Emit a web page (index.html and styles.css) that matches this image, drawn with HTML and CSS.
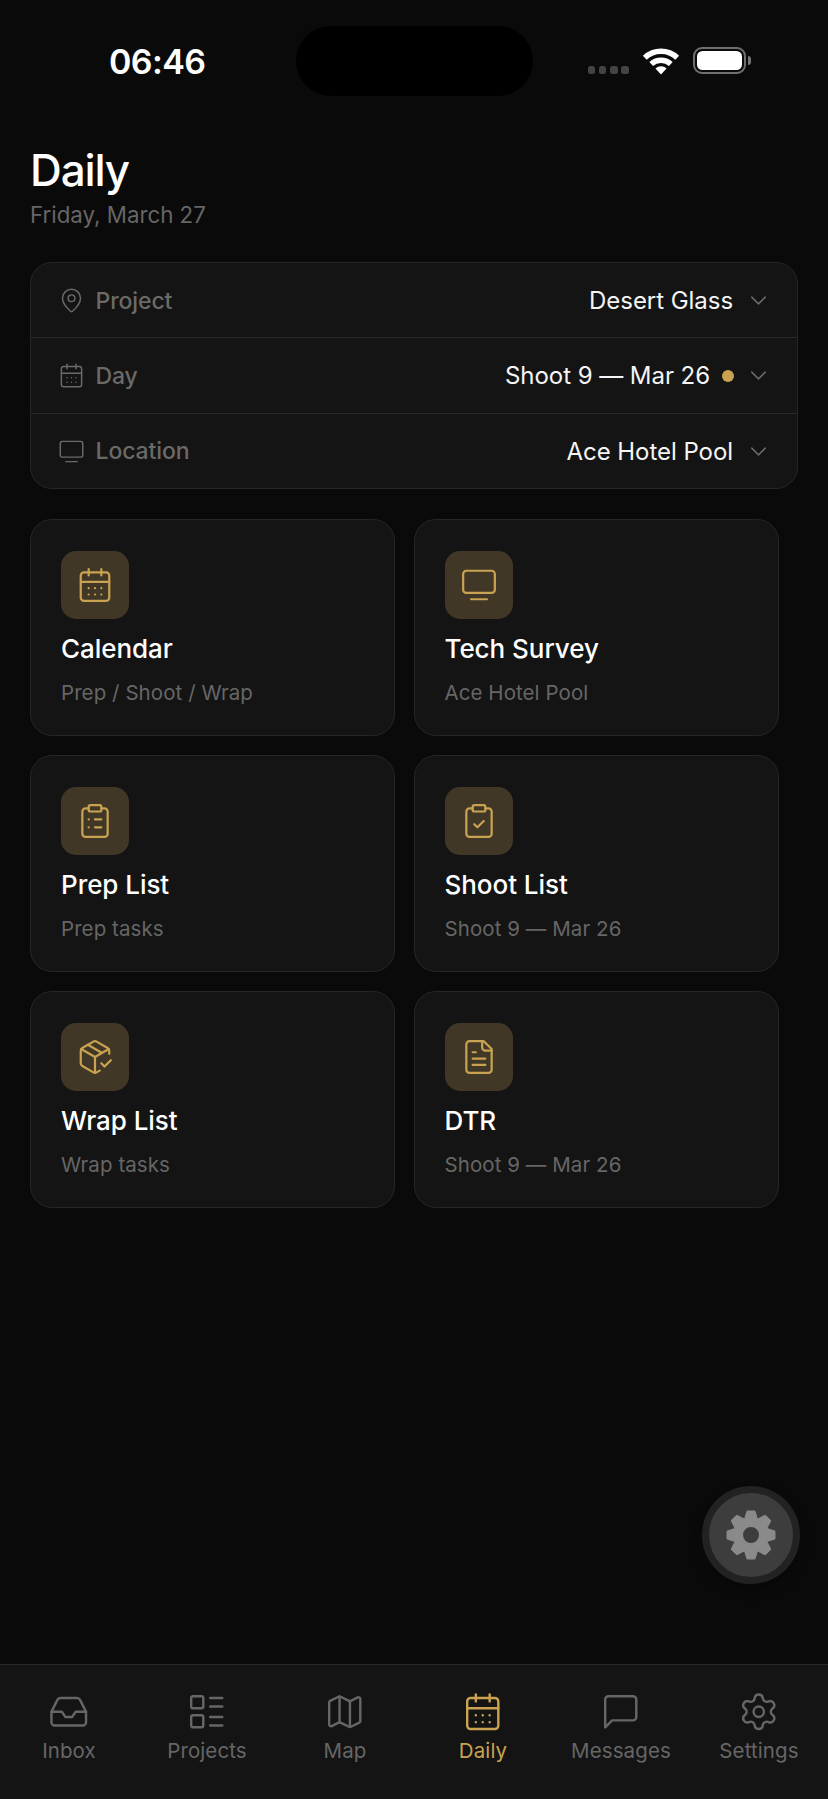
FILE: index.html
```
<!DOCTYPE html>
<html lang="en">
<head>
  <meta charset="UTF-8" />
  <meta name="viewport" content="width=device-width, initial-scale=1.0"/>
  <title>Daily</title>
  <link rel="stylesheet" href="styles.css">
</head>
<body>
  <!-- shared icons -->
  <svg class="sprite" aria-hidden="true">
    <symbol id="i-pin" viewBox="0 0 24 24"><path d="M20 10c0 4.993-5.539 10.193-7.399 11.799a1 1 0 0 1-1.202 0C9.539 20.193 4 14.993 4 10a8 8 0 0 1 16 0"/><circle cx="12" cy="10" r="3"/></symbol>
    <symbol id="i-calendar" viewBox="0 0 24 24"><path d="M8 2v4M16 2v4M3 10h18M8 14h.01M12 14h.01M16 14h.01M8 18h.01M12 18h.01M16 18h.01"/><rect x="3" y="4" width="18" height="18" rx="2"/></symbol>
    <symbol id="i-screen" viewBox="0 0 24 24"><path d="M7 21h10"/><rect x="2" y="3" width="20" height="14" rx="2"/></symbol>
    <symbol id="i-chevron" viewBox="0 0 24 24"><path d="m6 9 6 6 6-6"/></symbol>
    <symbol id="i-clipboard" viewBox="0 0 24 24"><rect x="8" y="2" width="8" height="4" rx="1"/><path d="M16 4h2a2 2 0 0 1 2 2v14a2 2 0 0 1-2 2H6a2 2 0 0 1-2-2V6a2 2 0 0 1 2-2h2"/></symbol>
  </svg>

  <div class="screen">
    <header class="status-bar">
      <span class="time">06:46</span>
      <div class="island"></div>
      <div class="status-icons">
        <div class="signal"><i></i><i></i><i></i><i></i></div>
        <svg class="wifi" viewBox="0 0 38 28">
          <path d="M2.8 10.7A23.7 23.7 0 0 1 35.2 10.7M9.2 17A14.8 14.8 0 0 1 28.8 17" fill="none" stroke="#fff" stroke-width="5.6"/>
          <path d="M19 27.4 13.4 21.5A8.2 8.2 0 0 1 24.6 21.5Z" fill="#fff"/>
        </svg>
        <div class="battery"><div class="battery-fill"></div></div>
        <div class="battery-cap"></div>
      </div>
    </header>

    <main class="content">
      <h1>Daily</h1>
      <p class="date">Friday, March 27</p>

      <div class="picker">
        <div class="picker-row">
          <svg class="icon"><use href="#i-pin"/></svg>
          <span class="label">Project</span>
          <span class="value">Desert Glass</span>
          <svg class="icon"><use href="#i-chevron"/></svg>
        </div>
        <div class="picker-row">
          <svg class="icon"><use href="#i-calendar"/></svg>
          <span class="label">Day</span>
          <span class="value">Shoot 9 — Mar 26</span>
          <span class="dot"></span>
          <svg class="icon"><use href="#i-chevron"/></svg>
        </div>
        <div class="picker-row">
          <svg class="icon"><use href="#i-screen"/></svg>
          <span class="label">Location</span>
          <span class="value">Ace Hotel Pool</span>
          <svg class="icon"><use href="#i-chevron"/></svg>
        </div>
      </div>

      <div class="cards">
        <div class="card">
          <div class="tile"><svg class="icon"><use href="#i-calendar"/></svg></div>
          <h2>Calendar</h2>
          <p>Prep / Shoot / Wrap</p>
        </div>
        <div class="card">
          <div class="tile"><svg class="icon"><use href="#i-screen"/></svg></div>
          <h2>Tech Survey</h2>
          <p>Ace Hotel Pool</p>
        </div>
        <div class="card">
          <div class="tile"><svg class="icon" viewBox="0 0 24 24"><use href="#i-clipboard" width="24" height="24"/><path d="M12 11h4M12 16h4M8 11h.01M8 16h.01"/></svg></div>
          <h2>Prep List</h2>
          <p>Prep tasks</p>
        </div>
        <div class="card">
          <div class="tile"><svg class="icon" viewBox="0 0 24 24"><use href="#i-clipboard" width="24" height="24"/><path d="m9 14 2 2 4-4"/></svg></div>
          <h2>Shoot List</h2>
          <p>Shoot 9 — Mar 26</p>
        </div>
        <div class="card">
          <div class="tile"><svg class="icon" viewBox="0 0 24 24"><path d="m16 16 2 2 4-4"/><path d="M21 10V8a2 2 0 0 0-1-1.73l-7-4a2 2 0 0 0-2 0l-7 4A2 2 0 0 0 3 8v8a2 2 0 0 0 1 1.73l7 4a2 2 0 0 0 2 0l2-1.14"/><path d="m7.5 4.27 9 5.15M3.29 7 12 12l8.71-5M12 22V12"/></svg></div>
          <h2>Wrap List</h2>
          <p>Wrap tasks</p>
        </div>
        <div class="card">
          <div class="tile"><svg class="icon" viewBox="0 0 24 24"><path d="M15 2H6a2 2 0 0 0-2 2v16a2 2 0 0 0 2 2h12a2 2 0 0 0 2-2V7Z"/><path d="M14 2v4a2 2 0 0 0 2 2h4M10 9H8M16 13H8M16 17H8"/></svg></div>
          <h2>DTR</h2>
          <p>Shoot 9 — Mar 26</p>
        </div>
      </div>
    </main>

    <button class="fab" aria-label="Tools">
      <svg viewBox="-25 -25 50 50">
        <defs><path id="tooth" d="M-6-15-3.4-23.3H3.4L6-15Z"/></defs>
        <g fill="#8a8a8a" stroke="#8a8a8a" stroke-width="2.4" stroke-linejoin="round">
          <use href="#tooth"/>
          <use href="#tooth" transform="rotate(45)"/>
          <use href="#tooth" transform="rotate(90)"/>
          <use href="#tooth" transform="rotate(135)"/>
          <use href="#tooth" transform="rotate(180)"/>
          <use href="#tooth" transform="rotate(225)"/>
          <use href="#tooth" transform="rotate(270)"/>
          <use href="#tooth" transform="rotate(315)"/>
        </g>
        <circle r="12.4" fill="none" stroke="#8a8a8a" stroke-width="8.8"/>
      </svg>
    </button>

    <nav class="tab-bar">
      <a class="tab">
        <svg class="icon" viewBox="0 0 24 24"><path d="M22 12h-6l-2 3h-4l-2-3H2"/><path d="M5.45 5.11 2 12v6a2 2 0 0 0 2 2h16a2 2 0 0 0 2-2v-6l-3.45-6.89A2 2 0 0 0 16.76 4H7.24a2 2 0 0 0-1.79 1.11z"/></svg>
        <span>Inbox</span>
      </a>
      <a class="tab">
        <svg class="icon" viewBox="0 0 24 24"><rect x="3" y="3" width="7" height="7" rx="1"/><rect x="3" y="14" width="7" height="7" rx="1"/><path d="M14 4h7M14 9h7M14 15h7M14 20h7"/></svg>
        <span>Projects</span>
      </a>
      <a class="tab">
        <svg class="icon" viewBox="0 0 24 24"><path d="M14.106 5.553a2 2 0 0 0 1.788 0l3.659-1.83A1 1 0 0 1 21 4.619v12.764a1 1 0 0 1-.553.894l-4.553 2.277a2 2 0 0 1-1.788 0l-4.212-2.106a2 2 0 0 0-1.788 0l-3.659 1.83A1 1 0 0 1 3 19.381V6.618a1 1 0 0 1 .553-.894l4.553-2.277a2 2 0 0 1 1.788 0z"/><path d="M15 5.764v15M9 3.236v15"/></svg>
        <span>Map</span>
      </a>
      <a class="tab active">
        <svg class="icon"><use href="#i-calendar"/></svg>
        <span>Daily</span>
      </a>
      <a class="tab">
        <svg class="icon" viewBox="0 0 24 24"><path d="M21 15a2 2 0 0 1-2 2H7l-4 4V5a2 2 0 0 1 2-2h14a2 2 0 0 1 2 2z"/></svg>
        <span>Messages</span>
      </a>
      <a class="tab">
        <svg class="icon" viewBox="0 0 24 24"><path d="M9.671 4.136a2.34 2.34 0 0 1 4.659 0 2.34 2.34 0 0 0 3.319 1.915 2.34 2.34 0 0 1 2.33 4.033 2.34 2.34 0 0 0 0 3.831 2.34 2.34 0 0 1-2.33 4.033 2.34 2.34 0 0 0-3.319 1.915 2.34 2.34 0 0 1-4.659 0 2.34 2.34 0 0 0-3.32-1.915 2.34 2.34 0 0 1-2.33-4.033 2.34 2.34 0 0 0 0-3.831A2.34 2.34 0 0 1 6.35 6.051a2.34 2.34 0 0 0 3.319-1.915"/><circle cx="12" cy="12" r="3"/></svg>
        <span>Settings</span>
      </a>
    </nav>
  </div>
</body>
</html>
```

FILE: styles.css
```
* {
  box-sizing: border-box;
}

body {
  margin: 0;
  font-family: Inter, 'Liberation Sans', sans-serif;
  background-color: #0a0a0a;
  color: #fff;
}

h1, h2, p {
  margin: 0;
}

.sprite {
  display: none;
}

.icon {
  display: block;
  flex-shrink: 0;
  fill: none;
  stroke: currentColor;
  stroke-width: 1.4;
  stroke-linecap: round;
  stroke-linejoin: round;
}

.screen {
  position: relative;
  display: flex;
  flex-direction: column;
  height: 1799px;
  overflow: hidden;
}

/* status bar */
.status-bar {
  display: grid;
  grid-template-columns: 296px 237px 1fr;
  height: 122px;
  padding-top: 26px;
}

.time {
  padding-left: 109px;
  font-size: 34px;
  font-weight: 600;
  line-height: 71px;
  letter-spacing: -0.6px;
}

.island {
  height: 70px;
  border-radius: 35px;
  background-color: #000;
}

.status-icons {
  display: flex;
  align-items: center;
  height: 69px;
  padding-left: 54.5px;
}

.signal {
  display: flex;
  gap: 3.8px;
  padding-top: 19px;
}

.signal i {
  width: 7.5px;
  height: 7.5px;
  border-radius: 2.5px;
  background-color: #434343;
}

.wifi {
  width: 38px;
  height: 28px;
  margin: 0 13px;
}

.battery {
  width: 53.5px;
  height: 27px;
  padding: 2px;
  border: 2px solid #6f6f6f;
  border-radius: 9px;
}

.battery-fill {
  height: 100%;
  border-radius: 5.5px;
  background-color: #fff;
}

.battery-cap {
  width: 3.5px;
  height: 9px;
  margin-left: 1.5px;
  border-radius: 0 4px 4px 0;
  background-color: #777;
}

/* page content */
.content {
  flex: 1;
  padding: 21px 30px 0;
}

h1 {
  font-size: 44px;
  font-weight: 500;
  line-height: 54px;
  letter-spacing: -1.1px;
}

.date {
  margin-top: 3px;
  font-size: 22.3px;
  line-height: 30px;
  color: #666;
}

.picker {
  width: 768px;
  margin-top: 32px;
  border: 1px solid #262626;
  border-radius: 22px;
  background-color: #141414;
}

.picker-row {
  display: flex;
  align-items: center;
  height: 74px;
  padding: 1px 25px 0 26.5px;
  color: #6b6a67;
}

.picker-row + .picker-row {
  height: 75.5px;
  border-top: 1px solid #282828;
}

.picker-row .icon {
  width: 27px;
  height: 27px;
  stroke-width: 1.3;
}

.label {
  flex: 1;
  margin-left: 11px;
  font-size: 23px;
  font-weight: 500;
  letter-spacing: -0.1px;
}

.value {
  margin-right: 12px;
  font-size: 24px;
  letter-spacing: -0.05px;
  color: #f5f5f5;
}

.dot {
  width: 12px;
  height: 12px;
  margin-right: 11px;
  border-radius: 50%;
  background-color: #c9a352;
}

.cards {
  display: grid;
  grid-template-columns: 365px 365px;
  gap: 19px 18.5px;
  margin-top: 30px;
}

.card {
  height: 217px;
  padding: 31px 30px;
  border: 1px solid #262626;
  border-radius: 22px;
  background-color: #141414;
}

.tile {
  display: flex;
  align-items: center;
  justify-content: center;
  width: 68px;
  height: 68px;
  border-radius: 15px;
  background-color: #413726;
  color: #c9a352;
}

.tile .icon {
  width: 38px;
  height: 38px;
}

.card h2 {
  margin-top: 14px;
  font-size: 26px;
  font-weight: 500;
  line-height: 32px;
  letter-spacing: -0.05px;
}

.card p {
  margin-top: 14.5px;
  font-size: 20.5px;
  line-height: 26px;
  letter-spacing: 0.07px;
  color: #666;
}

/* floating tools button */
.fab {
  position: absolute;
  left: 702px;
  top: 1486px;
  display: flex;
  align-items: center;
  justify-content: center;
  width: 98px;
  height: 98px;
  padding: 0;
  border: 7.5px solid #222;
  border-radius: 50%;
  background-color: #3d3d3d;
  box-shadow: 0 6px 12px rgba(0, 0, 0, 0.2);
}

.fab svg {
  flex-shrink: 0;
  width: 50px;
  height: 50px;
}

/* bottom tabs */
.tab-bar {
  display: grid;
  grid-template-columns: repeat(6, 138px);
  height: 135px;
  padding-top: 26px;
  border-top: 1px solid #292929;
  background-color: #141414;
}

.tab {
  display: flex;
  flex-direction: column;
  align-items: center;
  color: #666;
}

.tab .icon {
  width: 41.5px;
  height: 41.5px;
}

.tab span {
  margin-top: 5px;
  font-size: 20.5px;
  line-height: 26px;
  letter-spacing: 0.1px;
}

.tab.active {
  color: #c9a352;
}
```
